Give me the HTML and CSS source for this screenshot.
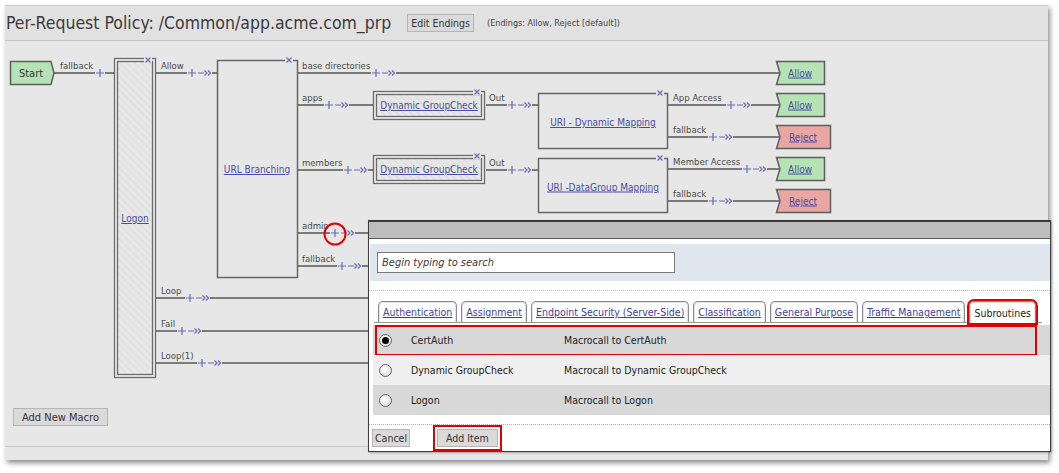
FILE: index.html
```html
<!DOCTYPE html>
<html>
<head>
<meta charset="utf-8">
<title>Per-Request Policy</title>
<link rel="stylesheet" href="styles.css">
</head>
<body>
<div class="page">
  <div class="frame">
    <div class="header">
      <h1 class="title">Per-Request Policy: /Common/app.acme.com_prp</h1>
      <button class="btn edit-btn">Edit Endings</button>
      <span class="endings">(Endings: Allow, Reject [default])</span>
    </div>
    <div class="canvas">
      <svg class="diagram" width="1043" height="405" viewBox="5 41 1043 405">
        <defs>
          <pattern id="hatch" width="5" height="5" patternUnits="userSpaceOnUse" patternTransform="rotate(-45)">
            <rect width="5" height="5" fill="#e7e7e7"/>
            <line x1="0" y1="0" x2="0" y2="5" stroke="#d4d4d4" stroke-width="1"/>
          </pattern>
          <g id="pc">
            <rect x="-5" y="-2" width="25" height="4" fill="#e7e7e7"/>
            <path d="M-4 0H4M0-4V4M6 0H12M12.5-2.5l2.5 2.5-2.5 2.5M16-2.5l2.5 2.5-2.5 2.5" stroke="#6b6bb5" stroke-width="1.2" fill="none"/>
          </g>
          <g id="p">
            <rect x="-5" y="-2" width="10" height="4" fill="#e7e7e7"/>
            <path d="M-4 0H4M0-4V4" stroke="#6b6bb5" stroke-width="1.2" fill="none"/>
          </g>
          <g id="xm">
            <rect x="-4" y="-3" width="8" height="6" fill="#e7e7e7"/>
            <path d="M-2.5-2.5L2.5 2.5M2.5-2.5L-2.5 2.5" stroke="#6b6bb5" stroke-width="1.2" fill="none"/>
          </g>
        </defs>

        <!-- wires -->
        <g class="w">
          <line x1="54" y1="73" x2="114" y2="73"/>
          <line x1="156" y1="73" x2="217" y2="73"/>
          <line x1="298" y1="73" x2="779" y2="73"/>
          <line x1="298" y1="105" x2="373" y2="105"/>
          <line x1="298" y1="170" x2="373" y2="170"/>
          <line x1="298" y1="233" x2="368" y2="233"/>
          <line x1="298" y1="266" x2="368" y2="266"/>
          <line x1="486" y1="105" x2="538" y2="105"/>
          <line x1="486" y1="170" x2="538" y2="170"/>
          <line x1="668" y1="105" x2="779" y2="105"/>
          <line x1="668" y1="137" x2="779" y2="137"/>
          <line x1="668" y1="169" x2="779" y2="169"/>
          <line x1="668" y1="201" x2="779" y2="201"/>
          <line x1="156" y1="298" x2="368" y2="298"/>
          <line x1="156" y1="331" x2="368" y2="331"/>
          <line x1="156" y1="363" x2="368" y2="363"/>
        </g>

        <!-- labels -->
        <g class="lbl">
          <text x="60" y="69">fallback</text>
          <text x="161" y="69">Allow</text>
          <text x="302" y="69">base directories</text>
          <text x="302" y="101">apps</text>
          <text x="302" y="166">members</text>
          <text x="302" y="229">admin</text>
          <text x="302" y="262">fallback</text>
          <text x="489" y="101">Out</text>
          <text x="489" y="166">Out</text>
          <text x="673" y="101">App Access</text>
          <text x="673" y="133">fallback</text>
          <text x="673" y="165">Member Access</text>
          <text x="673" y="197">fallback</text>
          <text x="161" y="294">Loop</text>
          <text x="161" y="327">Fail</text>
          <text x="161" y="359">Loop(1)</text>
        </g>

        <!-- connectors -->
        <use href="#p" x="100" y="73"/>
        <use href="#pc" x="192" y="73"/>
        <use href="#pc" x="376" y="73"/>
        <use href="#pc" x="329" y="105"/>
        <use href="#pc" x="348" y="170"/>
        <use href="#pc" x="335" y="233"/>
        <use href="#pc" x="342" y="266"/>
        <use href="#pc" x="512" y="105"/>
        <use href="#pc" x="512" y="170"/>
        <use href="#pc" x="731" y="105"/>
        <use href="#pc" x="713" y="137"/>
        <use href="#pc" x="747" y="169"/>
        <use href="#pc" x="713" y="201"/>
        <use href="#pc" x="190" y="298"/>
        <use href="#pc" x="182" y="331"/>
        <use href="#pc" x="202" y="363"/>

        <!-- start -->
        <polygon class="start" points="10.5,61.5 51,61.5 54,73 51,84.5 10.5,84.5"/>
        <text class="node-t" x="31" y="77" text-anchor="middle">Start</text>

        <!-- Logon macro -->
        <rect x="114.5" y="58.5" width="41" height="319" fill="#eeeeee" stroke="#6a6a6a" stroke-width="1.3"/>
        <rect x="117.5" y="61.5" width="35" height="313" fill="url(#hatch)" stroke="#6a6a6a" stroke-width="1.3"/>
        <use href="#xm" x="148" y="60"/>
        <text class="lnk" x="135" y="222" text-anchor="middle">Logon</text>

        <!-- URL Branching -->
        <rect class="box" x="217.5" y="60.5" width="80" height="217"/>
        <use href="#xm" x="289" y="60"/>
        <text class="lnk" x="257" y="173" text-anchor="middle">URL Branching</text>

        <!-- Dynamic GroupCheck 1 -->
        <rect x="373.5" y="91.5" width="111" height="28" fill="#eeeeee" stroke="#6a6a6a" stroke-width="1.3"/>
        <rect x="376.5" y="94.5" width="105" height="22" fill="url(#hatch)" stroke="#6a6a6a" stroke-width="1.3"/>
        <use href="#xm" x="477" y="92"/>
        <text class="lnk" x="429" y="109" text-anchor="middle">Dynamic GroupCheck</text>

        <!-- Dynamic GroupCheck 2 -->
        <rect x="373.5" y="155.5" width="111" height="28" fill="#eeeeee" stroke="#6a6a6a" stroke-width="1.3"/>
        <rect x="376.5" y="158.5" width="105" height="22" fill="url(#hatch)" stroke="#6a6a6a" stroke-width="1.3"/>
        <use href="#xm" x="477" y="156"/>
        <text class="lnk" x="429" y="173" text-anchor="middle">Dynamic GroupCheck</text>

        <!-- URI mapping boxes -->
        <rect class="box" x="538.5" y="93.5" width="129" height="55"/>
        <use href="#xm" x="660" y="93"/>
        <text class="lnk" x="603" y="126" text-anchor="middle">URI - Dynamic Mapping</text>

        <rect class="box" x="538.5" y="158.5" width="129" height="54"/>
        <use href="#xm" x="660" y="158"/>
        <text class="lnk" x="603" y="190.5" text-anchor="middle">URI -DataGroup Mapping</text>

        <!-- terminals -->
        <polygon class="allow" points="776.5,61.5 824.5,61.5 824.5,84.5 776.5,84.5 780,73"/>
        <text class="lnk" x="800" y="76.5" text-anchor="middle">Allow</text>
        <polygon class="allow" points="776.5,93.5 824.5,93.5 824.5,116.5 776.5,116.5 780,105"/>
        <text class="lnk" x="800" y="108.5" text-anchor="middle">Allow</text>
        <polygon class="reject" points="776.5,125.5 830.5,125.5 830.5,148.5 776.5,148.5 780,137"/>
        <text class="lnk" x="803" y="140.5" text-anchor="middle">Reject</text>
        <polygon class="allow" points="776.5,157.5 824.5,157.5 824.5,180.5 776.5,180.5 780,169"/>
        <text class="lnk" x="800" y="172.5" text-anchor="middle">Allow</text>
        <polygon class="reject" points="776.5,189.5 830.5,189.5 830.5,212.5 776.5,212.5 780,201"/>
        <text class="lnk" x="803" y="204.5" text-anchor="middle">Reject</text>

        <!-- annotation -->
        <circle cx="335" cy="234" r="10.5" fill="none" stroke="#e30000" stroke-width="2"/>
      </svg>
      <div class="canvas-foot">
        <button class="btn macro-btn">Add New Macro</button>
      </div>
    </div>
    <div class="strip"></div>

    <div class="popup">
      <div class="popup-title"></div>
      <div class="search-band">
        <input class="search" type="text" placeholder="Begin typing to search">
      </div>
      <div class="dots"></div>
      <div class="tabs">
        <a class="tab">Authentication</a>
        <a class="tab">Assignment</a>
        <a class="tab">Endpoint Security (Server-Side)</a>
        <a class="tab">Classification</a>
        <a class="tab">General Purpose</a>
        <a class="tab">Traffic Management</a>
        <span class="tab active">Subroutines</span>
      </div>
      <div class="rows">
        <div class="row sel">
          <span class="radio on"></span>
          <span>CertAuth</span>
          <span>Macrocall to CertAuth</span>
        </div>
        <div class="row alt">
          <span class="radio"></span>
          <span>Dynamic GroupCheck</span>
          <span>Macrocall to Dynamic GroupCheck</span>
        </div>
        <div class="row">
          <span class="radio"></span>
          <span>Logon</span>
          <span>Macrocall to Logon</span>
        </div>
      </div>
      <div class="dots foot-dots"></div>
      <div class="actions">
        <button class="btn cancel">Cancel</button>
        <button class="btn hl">Add Item</button>
      </div>
    </div>
  </div>
</div>
</body>
</html>
```

FILE: styles.css
```css
* { box-sizing: border-box; }
html, body { margin: 0; background: #fff; }
body {
  font-family: "DejaVu Sans", "Liberation Sans", sans-serif;
  font-stretch: condensed;
  color: #333;
}
.page { width: 1059px; height: 473px; padding: 5px 0 0 5px; overflow: hidden; }
.frame {
  position: relative;
  width: 1043px;
  height: 455px;
  background: #e7e7e7;
  display: flex;
  flex-direction: column;
  box-shadow: 2px 3px 5px rgba(0, 0, 0, .45);
}
.header {
  flex: none;
  height: 36px;
  display: flex;
  align-items: center;
  background: #e1e1e1;
  border-top: 1px solid #d0d0d0;
  border-bottom: 1px solid #c4c4c4;
  padding-left: 1px;
}
.title { margin: 0; font-size: 17.5px; font-weight: normal; color: #3a3a3a; }
.btn {
  font-family: inherit;
  font-stretch: condensed;
  font-size: 10.5px;
  color: #333;
  background: #dadada;
  border: 1px solid #b5b5b5;
  border-radius: 0;
  height: 18px;
  padding: 0 3px;
}
.edit-btn { margin-left: 16px; }
.endings { margin-left: 13px; font-size: 9px; color: #444; }

.canvas { flex: none; height: 406px; display: grid; border-bottom: 1px solid #c9c9c9; }
.canvas > * { grid-area: 1 / 1; }
.diagram { display: block; }
.canvas-foot { align-self: end; padding: 0 0 20px 8px; }
.macro-btn { font-size: 11px; padding: 0 8px; }
.strip { flex: 1; }

/* diagram */
.w line { stroke: #7a7a7a; stroke-width: 2; }
.lbl text { font-size: 9.5px; fill: #4a4a4a; }
.lnk { font-size: 10px; fill: #4b4ba6; text-decoration: underline; }
.node-t { font-size: 11px; fill: #333; }
.box { fill: none; stroke: #666; stroke-width: 1.5; }
.start, .allow { fill: #b5e3b5; stroke: #5e5e5e; stroke-width: 1.5; }
.reject { fill: #e8a7a2; stroke: #5e5e5e; stroke-width: 1.5; }

/* popup */
.popup {
  position: absolute;
  left: 363px;
  top: 215px;
  width: 683px;
  background: #fff;
  border: 1px solid #3d3d3d;
  border-top: 0;
  font-size: 10.5px;
  box-shadow: 1px 1px 2px rgba(0, 0, 0, .3);
}
.popup-title { height: 19px; background: #bdbdbd; border-top: 2px solid #3a3a3a; border-bottom: 1px solid #5a5a5a; }
.search-band { margin: 5px 0 0 1px; height: 37px; background: #e0e6ee; padding: 8px 0 0 7px; }
.search {
  display: block;
  width: 298px;
  height: 21px;
  border: 1px solid #7a7a7a;
  padding: 0 4px;
  font-family: inherit;
  font-stretch: condensed;
  font-style: italic;
  font-size: 11px;
  color: #333;
  background: #fff;
  outline: none;
}
.search::placeholder { color: #3a3a3a; opacity: 1; }
.dots { margin-top: 9px; border-top: 1px dotted #b0b0b0; }
.tabs {
  display: flex;
  align-items: flex-end;
  gap: 4px;
  height: 22px;
  margin: 10px 8px 0 5px;
  padding-left: 4px;
  border-bottom: 1px solid #9a9a9a;
}
.tab {
  flex: none;
  white-space: nowrap;
  height: 21px;
  display: flex;
  align-items: center;
  padding: 0 4px;
  border: 1px solid #8c8c8c;
  border-bottom: 0;
  border-radius: 5px 5px 0 0;
  background: #fff;
  box-shadow: inset 1px 1px 0 #e2e2e2, inset -1px 0 0 #e2e2e2;
  color: #3f3fa3;
  text-decoration: underline;
}
.tab.active {
  color: #222;
  text-decoration: none;
  height: 22px;
  margin-bottom: -1px;
  outline: 2px solid #e30000;
}
.rows { margin: 2px 0 0 4px; }
.row {
  position: relative;
  display: grid;
  grid-template-columns: 38px 153px 1fr;
  align-items: center;
  height: 30px;
  background: #d8d8d8;
  color: #222;
}
.row.alt { background: #efefef; }
.row.sel::after {
  content: "";
  position: absolute;
  left: 2px;
  top: 0;
  bottom: -1px;
  width: 658px;
  border: 2px solid #e30000;
}
.radio {
  width: 13px;
  height: 13px;
  margin-left: 6px;
  border-radius: 50%;
  border: 1px solid #666;
  background: radial-gradient(circle at 40% 35%, #fff, #d6d6d6);
  display: grid;
  place-items: center;
}
.radio.on::before { content: ""; width: 7px; height: 7px; border-radius: 50%; background: #000; }
.foot-dots { margin-top: 9px; }
.actions { display: flex; gap: 27px; padding: 4px 0 4px 3px; }
.btn.cancel { padding: 0 2px; }
.btn.hl { padding: 0 8px; outline: 2px solid #e30000; outline-offset: 2px; }
```
